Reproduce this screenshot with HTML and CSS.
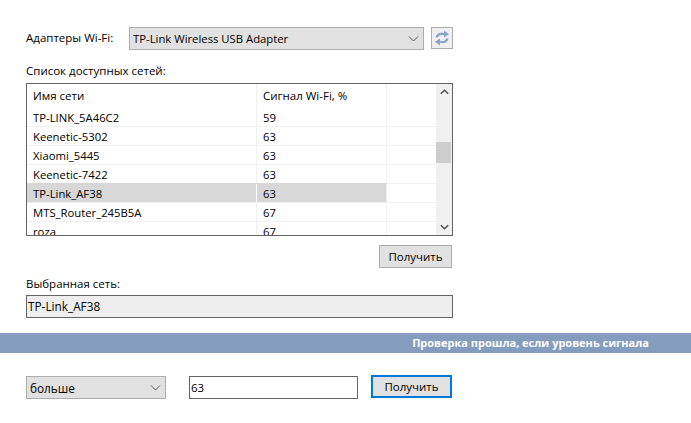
FILE: index.html
```html
<!DOCTYPE html>
<html lang="ru">
<head>
<meta charset="utf-8">
<title>Wi-Fi</title>
<link rel="stylesheet" href="styles.css">
</head>
<body>
<section class="panel">
  <div class="adapter-row">
    <span class="adapter-label">Адаптеры Wi-Fi:</span>
    <div class="combo combo-wide">
      <span>TP-Link Wireless USB Adapter</span>
      <svg class="chev" width="11" height="6" viewBox="0 0 11 6"><path d="M1 0.5 L5.5 5 L10 0.5" fill="none" stroke="#606060" stroke-width="1"/></svg>
    </div>
    <div class="refresh">
      <svg width="18" height="18" viewBox="0 0 18 18"><path d="M2.5 8.5 C3 4.5 7 3 11 4.2 L11 1.6 L16 5.3 L11 8.6 L11 6.3 C8 5.5 6 6 4.8 8.5 Z M15.5 9.5 C15 13.5 11 15 7 13.8 L7 16.4 L2 12.7 L7 9.4 L7 11.7 C10 12.5 12 12 13.2 9.5 Z" fill="#87a5c8"/></svg>
    </div>
  </div>
  <div class="list-title">Список доступных сетей:</div>
  <div class="list">
    <div class="list-body">
      <div class="row head"><div class="c1">Имя сети</div><div class="c2">Сигнал Wi-Fi, %</div><div class="c3"></div></div>
      <div class="row"><div class="c1">TP-LINK_5A46C2</div><div class="c2">59</div><div class="c3"></div></div>
      <div class="row"><div class="c1">Keenetic-5302</div><div class="c2">63</div><div class="c3"></div></div>
      <div class="row"><div class="c1">Xiaomi_5445</div><div class="c2">63</div><div class="c3"></div></div>
      <div class="row"><div class="c1">Keenetic-7422</div><div class="c2">63</div><div class="c3"></div></div>
      <div class="row selected"><div class="c1">TP-Link_AF38</div><div class="c2">63</div><div class="c3"></div></div>
      <div class="row"><div class="c1">MTS_Router_245B5A</div><div class="c2">67</div><div class="c3"></div></div>
      <div class="row"><div class="c1">roza</div><div class="c2">67</div><div class="c3"></div></div>
    </div>
    <div class="scrollbar">
      <svg width="9" height="6" viewBox="0 0 9 6"><path d="M0.8 4.8 L4.5 1.2 L8.2 4.8" fill="none" stroke="#505050" stroke-width="1.5"/></svg>
      <div class="track"><div class="thumb"></div></div>
      <svg width="9" height="6" viewBox="0 0 9 6"><path d="M0.8 1.2 L4.5 4.8 L8.2 1.2" fill="none" stroke="#505050" stroke-width="1.5"/></svg>
    </div>
  </div>
  <div class="action-row"><button class="btn btn-get">Получить</button></div>
  <div class="selected-title">Выбранная сеть:</div>
  <div class="readonly">TP-Link_AF38</div>
</section>
<div class="band"><span>Проверка прошла, если уровень сигнала</span></div>
<section class="check-row">
  <div class="combo combo-small">
    <span>больше</span>
    <svg class="chev" width="11" height="6" viewBox="0 0 11 6"><path d="M1 0.5 L5.5 5 L10 0.5" fill="none" stroke="#606060" stroke-width="1"/></svg>
  </div>
  <div class="input">63</div>
  <button class="btn btn-focus">Получить</button>
</section>
</body>
</html>
```
FILE: styles.css
```css
* { box-sizing: border-box; }
html, body { margin: 0; padding: 0; }
body {
  width: 691px;
  height: 423px;
  overflow: hidden;
  background: #fff;
  color: #000;
  font-family: "Open Sans", "Noto Sans", sans-serif;
  font-size: 11.5px;
  line-height: 16px;
}
.panel { padding: 27px 238px 0 26px; }
.adapter-row { display: flex; align-items: flex-start; height: 23px; }
.adapter-label { width: 103px; padding-top: 3px; }
.combo {
  display: flex;
  align-items: center;
  justify-content: space-between;
  height: 23px;
  background: #e1e1e1;
  border: 1px solid #adadad;
}
.combo-wide { width: 295px; padding: 0 3px; font-size: 11.3px; }
.combo-small { width: 140px; padding: 0 3px; font-size: 11.8px; }
.chev { margin-right: 1px; }
.refresh {
  width: 22px;
  height: 22px;
  margin-left: 7px;
  background: #f0f0f0;
  border: 1px solid #adadad;
  display: flex;
  align-items: center;
  justify-content: center;
}
.list-title { margin-top: 13px; height: 20px; }
.list {
  display: flex;
  height: 153px;
  border: 1px solid #646464;
}
.list-body { width: 409px; flex: none; height: 151px; overflow: hidden; }
.row { display: flex; height: 19px; line-height: 19px; border-bottom: 1px solid #f0f0f0; font-size: 11.3px; }
.row.head { height: 24px; line-height: 24px; border-bottom: 0; font-size: 11.5px; }
.row.head .c1, .row.head .c2, .row.head .c3 { height: 23px; }
.c1 { width: 230px; padding-left: 6px; border-right: 1px solid #f0f0f0; flex: none; }
.c2 { width: 130px; padding-left: 6px; border-right: 1px solid #f0f0f0; flex: none; }
.c3 { flex: 1; }
.row.selected .c1, .row.selected .c2 { background: #d7d7d7; box-shadow: 0 -1px 0 #d7d7d7; }
.row.selected .c1 { border-right-color: #fff; }
.scrollbar {
  width: 16px;
  flex: none;
  background: #f0f0f0;
  display: flex;
  flex-direction: column;
  align-items: center;
  padding: 5px 0;
}
.track { flex: 1; width: 100%; padding-top: 47px; }
.thumb { height: 21px; width: 15px; background: #cdcdcd; }
.action-row { display: flex; justify-content: flex-end; margin-top: 9px; padding-right: 1px; }
.btn {
  font: inherit;
  color: #000;
  padding: 0;
  height: 23px;
  background: #e1e1e1;
  border: 1px solid #adadad;
}
.btn-get { width: 73px; }
.selected-title { margin-top: 8px; height: 19px; }
.readonly {
  height: 23px;
  line-height: 21px;
  padding-left: 1px;
  font-size: 11.8px;
  background: #eeeeee;
  border: 1px solid #646464;
}
.band {
  display: flex;
  justify-content: flex-end;
  margin-top: 15px;
  height: 20px;
  padding-right: 42px;
  background: #849dbf;
  color: #fff;
  font-size: 11px;
  font-weight: 700;
  line-height: 19px;
}
.check-row { display: flex; align-items: flex-start; padding: 23px 0 0 26px; }
.input {
  width: 169px;
  height: 23px;
  margin-left: 23px;
  padding-left: 1px;
  line-height: 21px;
  background: #fff;
  border: 1px solid #646464;
}
.btn-focus { width: 81px; margin-left: 13px; margin-top: -1px; border: 2px solid #0078d7; }
```
